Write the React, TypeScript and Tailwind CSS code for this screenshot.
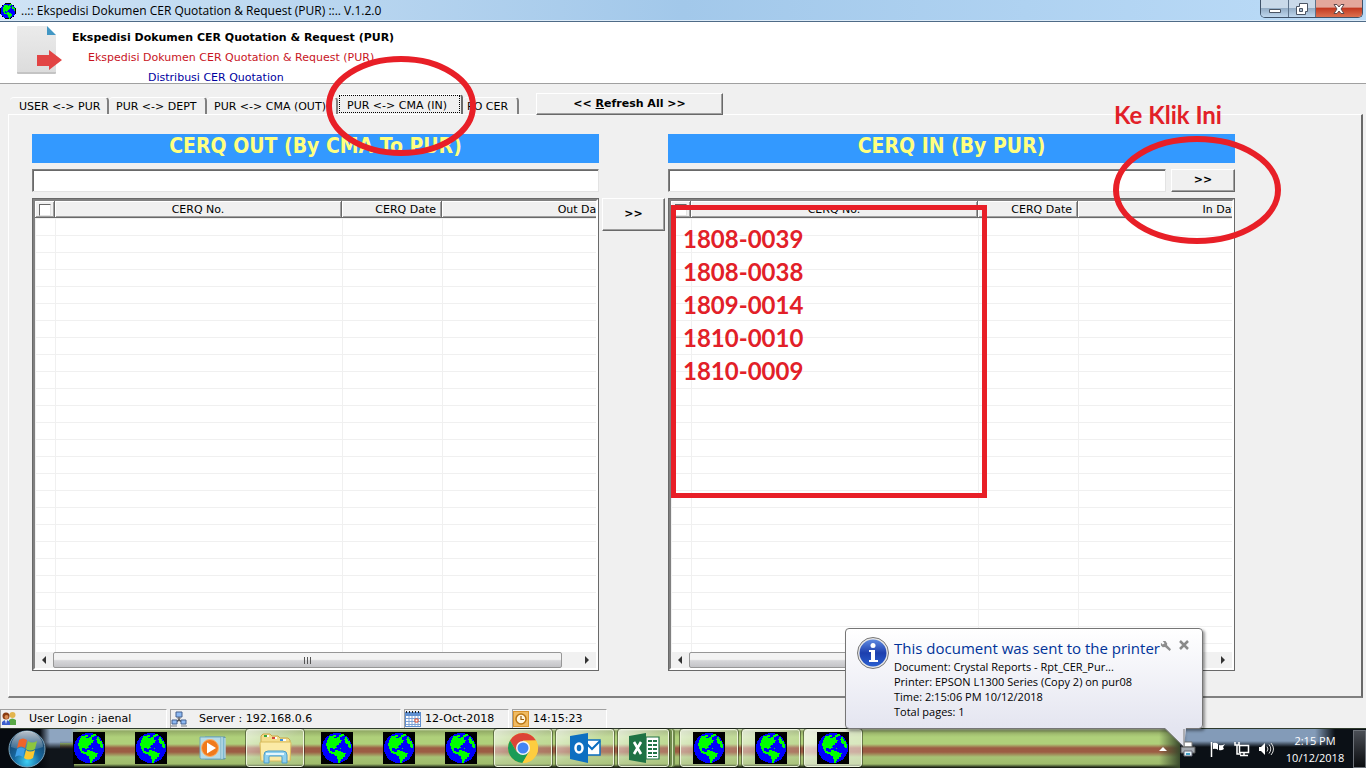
import React from "react";

const verdana = "font-['DejaVu_Sans',Verdana,sans-serif]";
const segoe = "font-['Open_Sans','Noto_Sans',sans-serif]";

function Globe({ className, boxed = true }: { className: string; boxed?: boolean }) {
  return (
    <svg viewBox="0 0 32 32" className={className} shapeRendering="crispEdges" aria-hidden="true">
      {boxed ? <rect width="32" height="32" fill="#000" /> : <circle cx="16" cy="16" r="16" fill="#000" />}
      <circle cx="16" cy="16" r="15" fill="#0000ff" />
      <path
        fill="#00ff00"
        d="M8 4h4v-1h3v2h-2v1h3v-1h2v-2h2v2h-1v3h2v1h-1v2h-2v2h-2v1h-1v2h-1v1h-2v-1h-3v3h2v1h2v2h2v1h-2v-1h-3v-1h-2v-2h-1v-2h-1v-3h-1v-3h1v-3h1v-2h1z"
      />
      <path fill="#00ff00" d="M14 18h3v1h3v1h2v1h3v1h-1v3h-2v2h-2v2h-1v2h-2v-4h-1v-3h-2v-2h-1v-2h1z" />
      <path fill="#00ff00" d="M20 2h3v2h-2v1h-1zM24 5h2v2h1v2h2v3h1v4h-2v-1h-1v-3h-2v-1h-1v-3h-1v-1h1zM11 15h5v1h-5zM19 16h1v1h-1z" />
    </svg>
  );
}

function DocumentIcon() {
  return (
    <svg viewBox="0 0 46 50" className="h-[50px] w-[46px] shrink-0" aria-hidden="true">
      <defs>
        <linearGradient id="paper" x2="0" y2="1">
          <stop stopColor="#ebebeb" />
          <stop offset="1" stopColor="#dcdcdc" />
        </linearGradient>
      </defs>
      <path d="M1 1h29v9h9v37a1 1 0 0 1-1 1H1a1 1 0 0 1-1-1V2a1 1 0 0 1 1-1z" fill="url(#paper)" />
      <path d="M0 47h39v1a1 1 0 0 1-1 1H1a1 1 0 0 1-1-1z" fill="#c4c4c4" />
      <path d="M30 1l9 9h-9z" fill="#4297c4" />
      <path d="M20 30h12v-5l13 10-13 10v-4H20z" fill="#e24444" />
    </svg>
  );
}

function StartOrb() {
  return (
    <svg viewBox="0 0 38 38" className="size-[38px]" aria-hidden="true">
      <defs>
        <radialGradient id="orb" cx=".5" cy=".85" r=".8">
          <stop stopColor="#3fd0f5" />
          <stop offset=".45" stopColor="#17689f" />
          <stop offset="1" stopColor="#16395c" />
        </radialGradient>
        <linearGradient id="shine" x2="0" y2="1">
          <stop stopColor="#fff" stopOpacity=".7" />
          <stop offset="1" stopColor="#fff" stopOpacity=".1" />
        </linearGradient>
      </defs>
      <circle cx="19" cy="19" r="18" fill="url(#orb)" stroke="#7ba5bd" />
      <path d="M3 17a16 16 0 0 1 32 0c-10 4-22 4-32 0z" fill="url(#shine)" />
      <path d="M11 10q4-3 8 0l-2 8q-4-3-8 0z" fill="#f0642a" />
      <path d="M20 11q4 3 9 0l-2 8q-5 3-9 0z" fill="#8cc63e" />
      <path d="M9 19q4-3 8 0l-2 8q-4-3-8 0z" fill="#3fa0e8" />
      <path d="M18 20q4 3 9 0l-2 8q-5 3-9 0z" fill="#fdc82f" />
    </svg>
  );
}

function MediaIcon() {
  return (
    <svg viewBox="0 0 32 32" className="size-8" aria-hidden="true">
      <path d="M8 5h20v22H8z" fill="#7fb9cf" stroke="#5c93aa" />
      <path d="M3 5h21v22H4l-1-1V5z" fill="#b6dbe7" stroke="#70a8bd" />
      <path d="M25 5v22M28 6v20" stroke="#d8eef5" />
      <circle cx="13" cy="16" r="8.500" fill="#f07a1c" stroke="#fbb066" />
      <path d="M10 10.500l9 5.500-9 5.500z" fill="#fff" />
    </svg>
  );
}

function FolderIcon() {
  return (
    <svg viewBox="0 0 34 32" className="h-8 w-[34px]" aria-hidden="true">
      <path d="M3 4l2-2h7l2 2h6l2 2h8l2 2v20H3z" fill="#f3dd8c" stroke="#c9a94a" />
      <path d="M6 3h5v2H6zM14 5h5v2h-5zM22 7h6v2h-6z" fill="#fff" />
      <path d="M6 3h3v2H6z" fill="#38a53a" />
      <path d="M14 5h3v2h-3z" fill="#d5473a" />
      <path d="M22 7h3v2h-3z" fill="#3d8fd8" />
      <path d="M2 11q0-1 1-1h29q1 0 1 1l-1 18H3z" fill="#fbeaa6" stroke="#d9bb5d" />
      <path d="M6 31v-8q0-4 4-4h15q4 0 4 4v8h-5v-6q0-1-1-1H12q-1 0-1 1v6z" fill="#8fd0ee" stroke="#4b9cc8" />
      <path d="M8 22h18" stroke="#e3f6fd" strokeWidth="2" />
    </svg>
  );
}

function ChromeIcon() {
  return (
    <svg viewBox="0 0 32 32" className="size-8" aria-hidden="true">
      <circle cx="16" cy="16" r="15" fill="#fcc934" />
      <path d="M3 8.500A15 15 0 0 1 29 8.500L16 9l-6.500 10.500z" fill="#dc4437" />
      <path d="M3 8.500a15 15 0 0 0 12.500 22.500l6.500-11.500-12.500 0z" fill="#1a9c57" />
      <path d="M29 8.500H16v7.500l6.500 3.500-7 11.500A15 15 0 0 0 29 8.500z" fill="#fdcd40" />
      <circle cx="16" cy="16" r="7" fill="#f5f5f5" />
      <circle cx="16" cy="16" r="5.500" fill="#4384f3" />
    </svg>
  );
}

function OutlookIcon() {
  return (
    <svg viewBox="0 0 32 32" className="size-8" aria-hidden="true">
      <path d="M17 8h14v15H17z" fill="#fff" stroke="#0a6dc0" strokeWidth="1.500" />
      <path d="M17 11l6 6 8-8" fill="none" stroke="#0a6dc0" strokeWidth="2" />
      <path d="M1 4l18-3v30L1 27z" fill="#0d6fc1" />
      <ellipse cx="10" cy="16" rx="3.500" ry="4.500" fill="none" stroke="#fff" strokeWidth="2.500" />
    </svg>
  );
}

function ExcelIcon() {
  return (
    <svg viewBox="0 0 32 32" className="size-8" aria-hidden="true">
      <path d="M18 5h13v22H18z" fill="#fff" stroke="#1f7244" strokeWidth="1.200" />
      <path d="M20 8h4v2h-4zM25 8h4v2h-4zM20 12h4v2h-4zM25 12h4v2h-4zM20 16h4v2h-4zM25 16h4v2h-4zM20 20h4v2h-4zM25 20h4v2h-4zM20 24h4v1h-4zM25 24h4v1h-4z" fill="#1f7244" />
      <path d="M1 4l17-3v30L1 28z" fill="#1f7244" />
      <path d="M6 10l7 12M13 10L6 22" stroke="#fff" strokeWidth="2.600" />
    </svg>
  );
}

function UsersIcon() {
  return (
    <svg viewBox="0 0 16 16" className="size-4" aria-hidden="true">
      <circle cx="11.500" cy="4" r="3" fill="#e3b54e" />
      <path d="M8 14V9q3-3 7 0v5z" fill="#58a845" />
      <circle cx="5" cy="5" r="3.500" fill="#8a3c12" />
      <circle cx="5.500" cy="6" r="2" fill="#d88a52" />
      <path d="M1 14v-3q4-4 8 0v3z" fill="#3c5fd0" />
      <path d="M4 9h2l-1 4z" fill="#fff" />
    </svg>
  );
}

function NetworkIcon() {
  return (
    <svg viewBox="0 0 16 16" className="size-4" aria-hidden="true">
      <path d="M8 5v4L3 12M8 9l5 3" stroke="#555" strokeWidth="1.500" fill="none" />
      <path d="M5 1h6v5H5zM1 9h5v4H1zM10 9h5v4h-5z" fill="#8db9f2" stroke="#44618f" />
      <path d="M0 15h6M10 15h6M6 7h4" stroke="#7a7f88" />
    </svg>
  );
}

function CalendarIcon() {
  return (
    <svg viewBox="0 0 16 16" className="size-4" aria-hidden="true">
      <path d="M0 1h16v15H0z" fill="#5f8fd0" />
      <path d="M1 5h14v10H1z" fill="#fff" />
      <path d="M1 7.500h14M1 10.500h14M1 13.500h14M4 5v10M7 5v10M10 5v10M13 5v10" stroke="#7da2d6" />
      <path d="M1 1h1M4 1h1M7 1h1M10 1h1M13 1h1" stroke="#222" strokeWidth="2" />
      <path d="M10 8h3v3h-3z" fill="#fff" stroke="#dc4a2a" />
    </svg>
  );
}

function ClockIcon() {
  return (
    <svg viewBox="0 0 16 16" className="size-4" aria-hidden="true">
      <path d="M0 0h16v16H0z" fill="#d9952f" />
      <path d="M1 1h14v14H1z" fill="#f0bb62" />
      <circle cx="8" cy="8" r="5" fill="#fff6df" stroke="#b87413" strokeWidth="1.500" />
      <path d="M8 5v3.500h3" fill="none" stroke="#9a5f10" strokeWidth="1.200" />
    </svg>
  );
}

const raised =
  "border border-t-white border-l-white border-r-[#696969] border-b-[#696969] bg-[#f0f0f0] shadow-[inset_-1px_-1px_0_#a0a0a0] font-bold text-[11px] text-black";

function TitleBar() {
  return (
    <header
      className={`flex h-[22px] shrink-0 items-start justify-between border-b border-[#4f6b87] bg-linear-to-r from-[#cfe3f5] via-[#a2c8ea] to-[#bcdcf8] shadow-[inset_0_-1px_0_#dcebf8] ${segoe}`}
    >
      <div className="flex h-[21px] items-center gap-[5px] text-xs text-black">
        <Globe className="size-4" boxed={false} />
        <h1>..:: Ekspedisi Dokumen CER Quotation &amp; Request (PUR) ::.. V.1.2.0</h1>
      </div>
      <div className="mr-[3px] flex h-[18px] overflow-hidden rounded-b-[5px] border border-t-0 border-[#3f5269]">
        <button aria-label="Minimize" className="grid w-7 place-items-center border-r border-[#5d728a] bg-linear-to-b from-[#c9d9e9] from-45% via-[#94adc6] via-50% to-[#bfd7ee]">
          <svg viewBox="0 0 12 12" className="size-3"><path d="M.5 6.500h11v3H.5z" fill="#fff" stroke="#4b5564" /></svg>
        </button>
        <button aria-label="Restore" className="grid w-[27px] place-items-center border-r border-[#5d728a] bg-linear-to-b from-[#c9d9e9] from-45% via-[#94adc6] via-50% to-[#bfd7ee]">
          <svg viewBox="0 0 12 12" className="size-3"><path d="M3.500.5h8v8h-2v3h-9v-8h3z" fill="#fff" stroke="#4b5564" /><path d="M3.500 5.500h3v3h-3z" fill="#a9bdd1" stroke="#4b5564" /></svg>
        </button>
        <button aria-label="Close" className="grid w-[46px] place-items-center bg-linear-to-b from-[#e3a79b] from-40% via-[#c33a22] via-50% to-[#dc7050]">
          <svg viewBox="0 0 12 10" className="h-[10px] w-3"><path d="M1 .5h3l2 2.500 2-2.500h3L8 5l3 4.500H8L6 7 4 9.500H1L4 5z" fill="#fff" stroke="#5f4a4d" /></svg>
        </button>
      </div>
    </header>
  );
}

const tabs = [
  { label: "USER <-> PUR", box: "w-[99px] pl-[9px]" },
  { label: "PUR <-> DEPT", box: "w-[98px] pl-[7px]" },
  { label: "PUR <-> CMA (OUT)", box: "w-[131px] pl-[7px]" },
  { label: "PUR <-> CMA (IN)", box: "w-[125px]", active: true },
  { label: "PO CER", box: "w-[56px] pl-1" },
];

function TabStrip() {
  return (
    <nav className="flex h-[30px] shrink-0 items-end pl-[10px]">
      <div role="tablist" className="flex items-end text-[11px] whitespace-nowrap">
        {tabs.map((t) =>
          t.active ? (
            <button key={t.label} role="tab" aria-selected="true" className={`${t.box} h-5 rounded-t-sm border-t border-r-2 border-t-white border-r-[#696969] px-px pb-px`}>
              <span className="flex h-full items-center border border-dotted border-black pt-1 pl-[7px]">{t.label}</span>
            </button>
          ) : (
            <button key={t.label} role="tab" aria-selected="false" className={`${t.box} h-[17px] overflow-hidden rounded-t-sm border-t border-r-2 border-t-white border-r-[#808080] text-left leading-[18px]`}>
              {t.label}
            </button>
          ),
        )}
      </div>
      <button className={`${raised} relative -mb-px ml-[17px] h-[22px] w-[187px]`}>
        {"<< "}
        <u>R</u>
        {"efresh All >>"}
      </button>
    </nav>
  );
}

const rowKeys = Array.from({ length: 26 }, (_, i) => i);
const headCell =
  "border-r border-b border-r-[#696969] border-b-[#696969] bg-[#f0f0f0] shadow-[inset_1px_1px_0_#fff,inset_-1px_-1px_0_#a0a0a0] h-[17px] p-0 pt-px font-normal leading-[15px] whitespace-nowrap";
const cell = "h-[17px] border-t border-l border-[#f0f0f0] p-0";

function CerqList({ name, lastColumn, width }: { name: string; lastColumn: string; width: string }) {
  return (
    <div className="flex min-h-0 flex-1 flex-col border border-[#696969] bg-white">
      <div className="flex min-h-0 flex-1 flex-col border-2 border-t-[#808080] border-r-white border-b-white border-l-[#808080]">
        <div className="min-h-0 flex-1 overflow-hidden">
          <table aria-label={name} className={`${width} table-fixed border-separate border-spacing-0 text-[11px]`}>
            <colgroup>
              <col className="w-5" />
              <col className="w-[287px]" />
              <col className="w-[100px]" />
              <col />
            </colgroup>
            <thead>
              <tr>
                <th className={headCell}>
                  <input
                    type="checkbox"
                    aria-label={`Select all ${name}`}
                    className="mx-auto block size-3 appearance-none border border-t-[#696969] border-r-[#e3e3e3] border-b-[#e3e3e3] border-l-[#696969] bg-white"
                  />
                </th>
                <th className={headCell}>CERQ No.</th>
                <th className={`${headCell} pr-[5px] text-right`}>CERQ Date</th>
                <th className={headCell}>{lastColumn}</th>
              </tr>
            </thead>
            <tbody>
              {rowKeys.map((k) => (
                <tr key={k}>
                  <td className={cell} />
                  <td className={cell} />
                  <td className={cell} />
                  <td className={cell} />
                </tr>
              ))}
            </tbody>
          </table>
        </div>
        <div className="flex h-4 shrink-0 items-stretch bg-[#f1f1f1]">
          <button aria-label="Scroll left" className="grid w-[18px] place-items-center">
            <svg viewBox="0 0 4 8" className="h-2 w-1"><path d="M4 0v8L0 4z" fill="#333" /></svg>
          </button>
          <div className="grid flex-1 place-items-center rounded-xs border border-[#979797] bg-linear-to-b from-[#f3f3f3] from-45% via-[#d6d6d9] via-55% to-[#c4c4c7]">
            <svg viewBox="0 0 8 7" className="h-[7px] w-2" shapeRendering="crispEdges"><path d="M.5 0v7M3.500 0v7M6.500 0v7" stroke="#555" /></svg>
          </div>
          <span className="w-4" />
          <button aria-label="Scroll right" className="grid w-[18px] place-items-center">
            <svg viewBox="0 0 4 8" className="h-2 w-1"><path d="M0 0v8l4-4z" fill="#333" /></svg>
          </button>
        </div>
      </div>
    </div>
  );
}

function SearchField({ label }: { label: string }) {
  return (
    <input
      type="text"
      aria-label={label}
      className="h-[23px] w-full min-w-0 flex-1 border border-t-[#808080] border-r-[#e3e3e3] border-b-[#e3e3e3] border-l-[#808080] bg-white px-1 text-[11px] shadow-[inset_1px_1px_0_#696969] outline-none"
    />
  );
}

function Banner({ children }: { children: React.ReactNode }) {
  return (
    <h2 className="flex h-[29px] shrink-0 items-center justify-center bg-[#3399ff] pb-1 font-['DejaVu_Sans_Condensed','DejaVu_Sans',Tahoma,sans-serif] text-[21px] font-bold whitespace-nowrap text-[#ffff80]">
      {children}
    </h2>
  );
}

function Workspace() {
  return (
    <main className="mr-[3px] mb-[11px] ml-[8px] flex min-h-0 flex-1 border-t border-r-2 border-b-2 border-l border-t-white border-r-[#696969] border-b-[#808080] border-l-white pt-[19px] pr-[126px] pb-[25px] pl-[23px]">
      <section className="flex min-w-0 flex-1 flex-col">
        <Banner>CERQ OUT (By CMA To PUR)</Banner>
        <div className="mt-[6px] mb-[6px] flex">
          <SearchField label="Search CERQ OUT" />
        </div>
        <CerqList name="CERQ OUT" lastColumn="Out Date" width="w-[689px]" />
      </section>
      <div className="w-[69px] shrink-0 px-[3px] pt-16">
        <button aria-label="Move to CERQ IN" className={`${raised} h-[33px] w-full`}>
          {">>"}
        </button>
      </div>
      <section className="flex min-w-0 flex-1 flex-col">
        <Banner>CERQ IN (By PUR)</Banner>
        <div className="mt-[6px] mb-[6px] flex gap-[5px]">
          <SearchField label="Search CERQ IN" />
          <button aria-label="Submit CERQ IN" className={`${raised} h-[23px] w-16`}>
            {">>"}
          </button>
        </div>
        <CerqList name="CERQ IN" lastColumn="In Date" width="w-[697px]" />
      </section>
    </main>
  );
}

function StatusBar() {
  const panel = "flex h-full items-center border-t border-r border-l border-t-[#a0a0a0] border-r-white border-l-[#a0a0a0]";
  return (
    <footer className="flex h-[19px] shrink-0 gap-[3px] text-[11px] whitespace-nowrap">
      <div className={`${panel} w-[167px] gap-3`}><UsersIcon />User Login : jaenal</div>
      <div className={`${panel} w-[231px] gap-3`}><NetworkIcon />Server : 192.168.0.6</div>
      <div className={`${panel} w-[105px] gap-1`}><CalendarIcon />12-Oct-2018</div>
      <div className={`${panel} w-[95px] gap-1`}><ClockIcon />14:15:23</div>
    </footer>
  );
}

const open =
  "rounded-[3px] border border-[#eef5dd] bg-linear-to-br from-white/70 via-white/25 to-white/10 outline outline-black/40";

const apps: { label: string; icon: React.ReactNode; box: string }[] = [
  { label: "CER User", icon: <Globe className="size-8" />, box: "w-[58px]" },
  { label: "CER Department", icon: <Globe className="size-8" />, box: "w-[58px]" },
  { label: "Media Player", icon: <MediaIcon />, box: "w-[58px]" },
  { label: "Explorer", icon: <FolderIcon />, box: `w-[58px] ${open}` },
  { label: "CER Purchasing", icon: <Globe className="size-8" />, box: "w-[58px]" },
  { label: "CER Quotation", icon: <Globe className="size-8" />, box: "w-[58px]" },
  { label: "CER Request", icon: <Globe className="size-8" />, box: "w-[58px]" },
  { label: "Chrome", icon: <ChromeIcon />, box: `w-[58px] ${open}` },
  { label: "Outlook", icon: <OutlookIcon />, box: `w-[58px] ${open}` },
  { label: "Excel", icon: <ExcelIcon />, box: `w-[51px] mr-[7px] shadow-[3px_0_0_#6f8a4c,4px_0_0_#d8e6bd,6px_0_0_#6f8a4c] ${open}` },
  { label: "Ekspedisi 1", icon: <Globe className="size-8" />, box: `w-[58px] ${open}` },
  { label: "Ekspedisi 2", icon: <Globe className="size-8" />, box: `w-[58px] ${open}` },
  { label: "Ekspedisi 3", icon: <Globe className="size-8" />, box: `w-[58px] bg-white/40 ${open}` },
];

function Taskbar() {
  return (
    <div className="flex h-10 shrink-0 items-stretch border-t border-[#2e3a2c] bg-[linear-gradient(to_bottom,#dbe8c4_0,#93ab66_2px,#afd07a_8px,#afd07a_15px,#9c5c43_19px,#9c5c43_23px,#a6c274_28px,#9fbb6b_35px,#2a331f_38px,#0c0f0a_39px)]">
      <div className="flex w-15 shrink-0 items-center bg-[linear-gradient(to_right,#060a10_40px,transparent_50px),linear-gradient(to_bottom,#8ea5c0_13px,#10151b_20px)] pl-2">
        <button aria-label="Start"><StartOrb /></button>
      </div>
      <div className="flex shrink-0 gap-1 bg-[linear-gradient(to_bottom,transparent_12px,#10151b_20px),linear-gradient(to_right,#8ea5c0_0,#8ea5c0_10px,transparent_22px)] bg-[length:14px_100%,30px_14px] bg-no-repeat">
        {apps.map((a) => (
          <button key={a.label} aria-label={a.label} className={`grid h-[38px] place-items-center ${a.box}`}>
            {a.icon}
          </button>
        ))}
      </div>
      <div className={`ml-auto flex items-stretch text-white ${segoe}`}>
        <button aria-label="Show hidden icons" className="grid w-[21px] place-items-center bg-linear-to-r from-transparent to-[#3a4a2c] pr-[13px]">
          <svg viewBox="0 0 8 4" className="h-1 w-2"><path d="M0 4l4-4 4 4z" fill="#fff" /></svg>
        </button>
        <div className="flex items-center bg-[linear-gradient(to_bottom,transparent_12px,#0b1016_18px),linear-gradient(to_right,#5c6f86_0,#839bb8_8px,#839bb8_135px,#0b1016_155px)]">
          <svg viewBox="0 0 16 16" className="mr-[14px] size-4" aria-label="Printer">
            <path d="M4 1h8v5H4z" fill="#fff" stroke="#777" /><path d="M1 6h14v6H1z" fill="#a5abb2" stroke="#555" /><path d="M4 10h8v5H4z" fill="#e6f3fa" stroke="#667" /><path d="M6 12h4v2H6z" fill="#46a0c8" />
          </svg>
          <svg viewBox="0 0 16 16" className="mr-2 size-4" aria-label="Action Center">
            <path d="M1.500 1v15" stroke="#fff" strokeWidth="1.500" /><path d="M3 2q3-1 5 1v6q-2-2-5-1zM9 4q3 1 6-1l-2 3 1 2q-3 2-5 1z" fill="#fff" />
          </svg>
          <svg viewBox="0 0 16 16" className="mr-2 size-4" aria-label="Network">
            <path d="M5.500 4.500h9v7h-9zM10 12v2.500M6 14.500h8" fill="none" stroke="#fff" strokeWidth="1.500" /><path d="M1 1v3h4V1M3 4v9h4" fill="none" stroke="#fff" strokeWidth="1.500" />
          </svg>
          <svg viewBox="0 0 16 16" className="mr-[10px] size-4" aria-label="Volume">
            <path d="M1 6h2l4-4v12l-4-4H1z" fill="#fff" /><path d="M9 5.500q2 2.500 0 5M11 3.500q3.500 4.500 0 9M13 2q5 6 0 12" fill="none" stroke="#ddd" />
          </svg>
          <div className="mr-[7px] w-[62px] text-center text-[11px] leading-[17px] whitespace-nowrap">
            <div>2:15 PM</div>
            <div>10/12/2018</div>
          </div>
          <button aria-label="Show desktop" className="h-[38px] w-[13px] border border-[#6c7178] bg-linear-to-b from-[#4b4f56] to-[#0b0d10]" />
        </div>
      </div>
    </div>
  );
}

function PrinterBalloon() {
  return (
    <aside className={`absolute right-[163px] bottom-[39px] flex h-[101px] w-[358px] rounded border border-[#767676] bg-linear-to-b from-white to-[#e4e5f0] pt-2 pl-[11px] text-black shadow-[2px_2px_3px_#0006] ${segoe}`}>
      <svg viewBox="0 0 32 32" className="size-8 shrink-0" aria-hidden="true">
        <defs>
          <linearGradient id="info" x2="0" y2="1"><stop stopColor="#5f8ae0" /><stop offset=".5" stopColor="#1d3fae" /><stop offset="1" stopColor="#2a5fd0" /></linearGradient>
        </defs>
        <circle cx="16" cy="16" r="15.500" fill="#e8e8e8" stroke="#777" />
        <circle cx="16" cy="16" r="13.500" fill="url(#info)" />
        <circle cx="16" cy="8.500" r="2.500" fill="#fff" />
        <path d="M12 13h6v10h3v2h-9v-2h2v-8h-2z" fill="#fff" />
      </svg>
      <div className="ml-[5px] text-[11px] leading-[15px] whitespace-nowrap">
        <h3 className="mt-px mb-px text-[15px] leading-5 text-[#003399]">This document was sent to the printer</h3>
        <p>Document: Crystal Reports - Rpt_CER_Pur...</p>
        <p>Printer: EPSON L1300 Series (Copy 2) on pur08</p>
        <p>Time: 2:15:06 PM 10/12/2018</p>
        <p>Total pages: 1</p>
      </div>
      <div className="mt-[3px] flex shrink-0 items-start gap-2">
        <button aria-label="Notification settings">
          <svg viewBox="0 0 12 12" className="size-[11px]"><path d="M3 1l3 0 2 3-.500 1.500L12 10l-1.500 2L5.500 7.500 3 8 1 6V3l2 2 2-1.500z" fill="#8d8d8d" /></svg>
        </button>
        <button aria-label="Close notification">
          <svg viewBox="0 0 10 10" className="size-[10px]"><path d="M1 1l8 8M9 1L1 9" stroke="#8a8a8a" strokeWidth="2.500" /></svg>
        </button>
      </div>
      <svg viewBox="0 0 22 21" className="absolute right-[15px] -bottom-[21px] h-[21px] w-[22px]" aria-hidden="true">
        <path d="M0 0l19 19 2-19z" fill="#e4e5f0" />
        <path d="M0 1l19 18V1" fill="none" stroke="#767676" />
      </svg>
    </aside>
  );
}

const notes = ["1808-0039", "1808-0038", "1809-0014", "1810-0010", "1810-0009"];

function Annotations() {
  return (
    <div className="pointer-events-none absolute inset-0 font-[Lato,sans-serif] text-2xl font-bold whitespace-nowrap text-[#e22028]">
      <svg viewBox="0 0 150 100" className="absolute top-[56px] left-[326px] h-[100px] w-[150px]" aria-hidden="true">
        <ellipse cx="75" cy="50" rx="72" ry="47" fill="none" stroke="#e81f27" strokeWidth="6" />
      </svg>
      <svg viewBox="0 0 168 108" className="absolute top-[136px] left-[1113px] h-[108px] w-[168px]" aria-hidden="true">
        <ellipse cx="84" cy="54" rx="81" ry="51" fill="none" stroke="#e81f27" strokeWidth="6" />
      </svg>
      <p className="absolute top-[99px] left-[1114px] leading-8">Ke Klik Ini</p>
      <ul className="absolute top-[205px] left-[671px] h-[293px] w-[316px] border-[5px] border-[#e81f27] pt-3 pl-[7px] leading-[33px]">
        {notes.map((n) => (
          <li key={n}>{n}</li>
        ))}
      </ul>
    </div>
  );
}

export default function App() {
  return (
    <div className={`relative flex h-screen flex-col overflow-hidden bg-[#f0f0f0] text-black ${verdana}`}>
      <TitleBar />
      <div className="flex h-[62px] shrink-0 items-start border-b border-[#a0a0a0] bg-white pt-[3px] pl-[17px]">
        <DocumentIcon />
        <div className="ml-[9px] pt-[3px] text-[11px] leading-5 whitespace-nowrap">
          <p className="font-bold">Ekspedisi Dokumen CER Quotation &amp; Request (PUR)</p>
          <p className="pl-4 text-[#c8141e]">Ekspedisi Dokumen CER Quotation &amp; Request (PUR)</p>
          <p className="pl-19 text-[#0000a0]">Distribusi CER Quotation</p>
        </div>
      </div>
      <TabStrip />
      <Workspace />
      <StatusBar />
      <Taskbar />
      <PrinterBalloon />
      <Annotations />
    </div>
  );
}
